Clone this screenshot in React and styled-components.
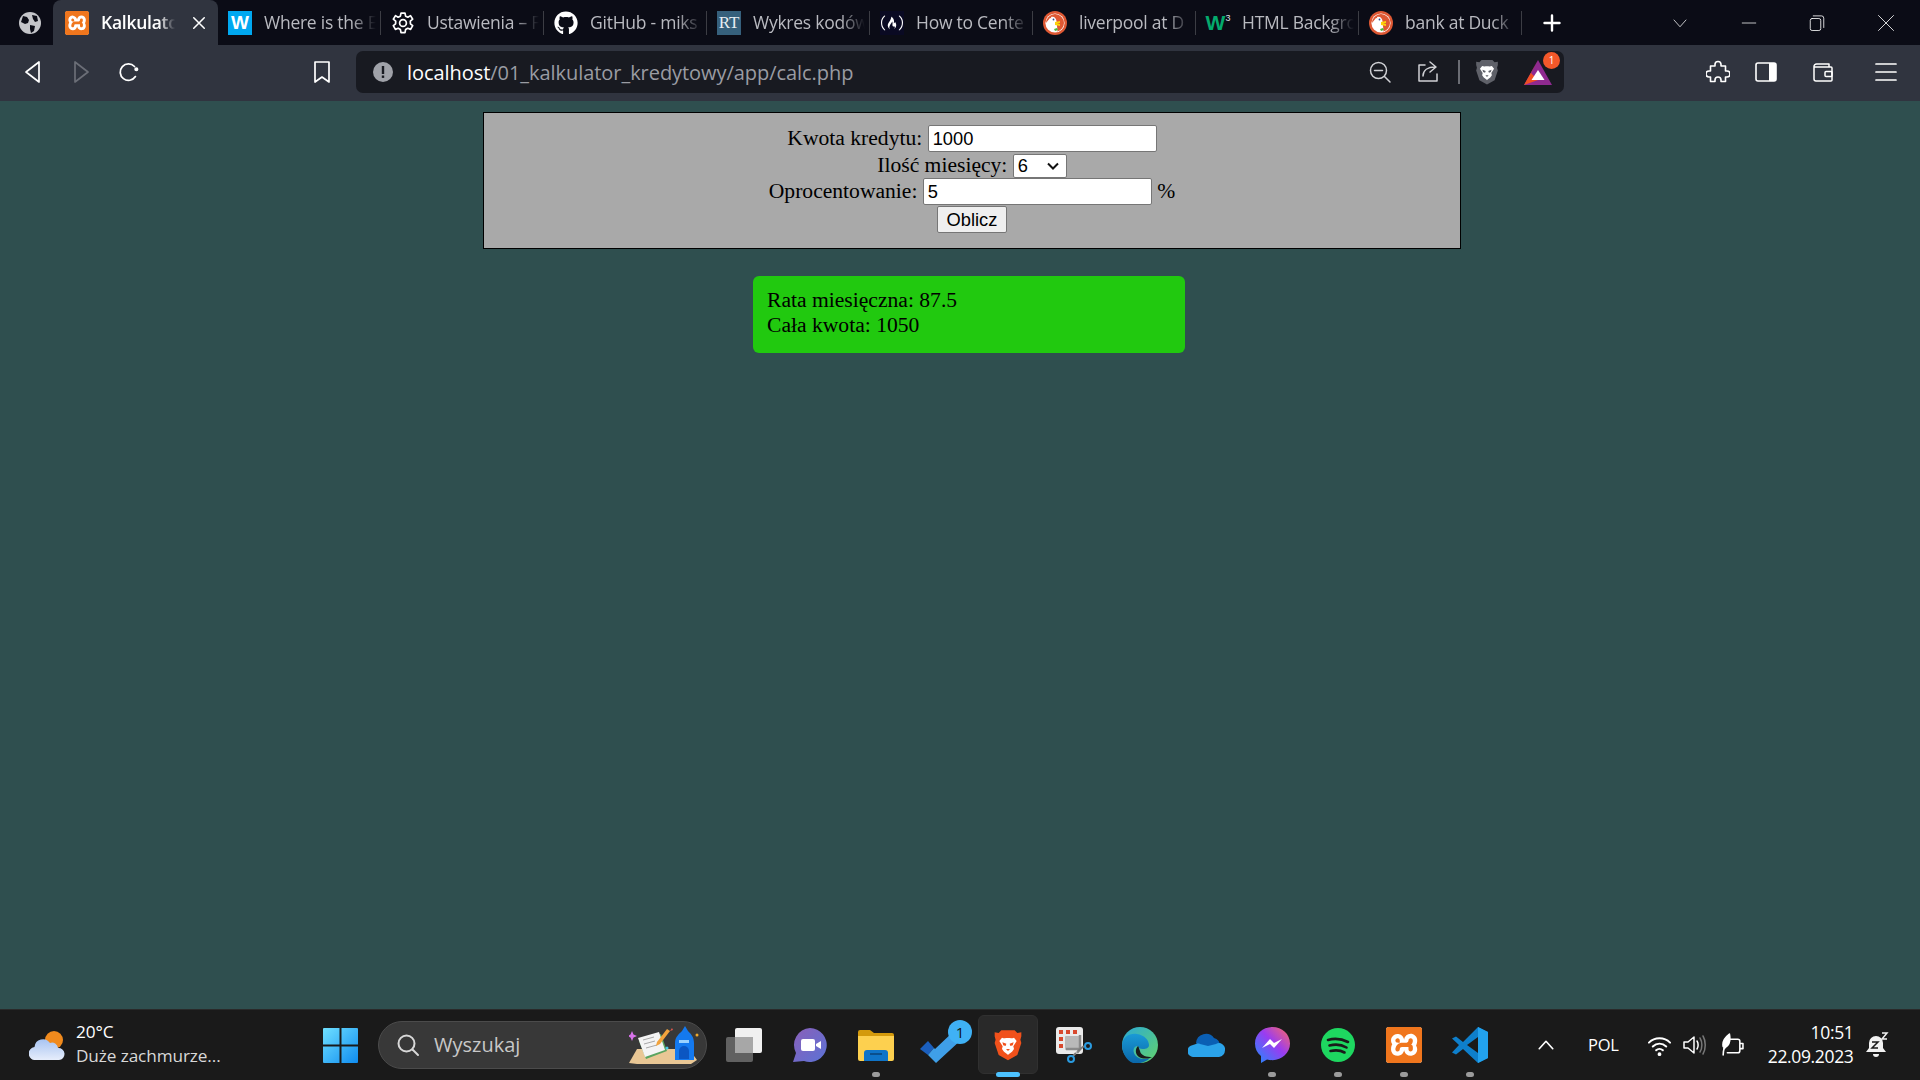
import React from "react";
import styled, { createGlobalStyle } from "styled-components";
import { FaGithub } from "react-icons/fa";
import { SiFreecodecamp, SiXampp } from "react-icons/si";

const UI_FONT = '"Open Sans", "Noto Sans", "Liberation Sans", sans-serif';

const SELECT_ARROW =
  "url(\"data:image/svg+xml,%3Csvg xmlns='http://www.w3.org/2000/svg' width='12' height='8' viewBox='0 0 12 8'%3E%3Cpath d='M1 1.500l5 5 5-5' fill='none' stroke='%23111' stroke-width='2'/%3E%3C/svg%3E\")";

const GlobalStyle = createGlobalStyle`
  html, body { margin: 0; padding: 0; height: 100%; background: #2f4f4f; overflow: hidden; }
  #root { height: 100%; }
`;

const Screen = styled.div`
  height: 100vh;
  display: flex;
  flex-direction: column;
  font-family: ${UI_FONT};
`;

/* ---------- tabs ---------- */
const TabStrip = styled.div`
  height: 45px;
  flex: none;
  display: flex;
  align-items: center;
  background: #0b0c16;
  color: #fff;
`;

const GlobeSlot = styled.div`
  width: 53px;
  display: flex;
  justify-content: center;
  padding-left: 7px;
  box-sizing: border-box;
`;

const Tab = styled.div`
  width: ${(p) => (p.$active ? "165px" : "163px")};
  height: 45px;
  flex: none;
  box-sizing: border-box;
  display: flex;
  align-items: center;
  gap: 12px;
  padding-left: ${(p) => (p.$active ? "12px" : "10px")};
  background: ${(p) => (p.$active ? "#30343f" : "transparent")};
  border-radius: ${(p) => (p.$active ? "8px 8px 0 0" : "0")};
  position: relative;
  ${(p) =>
    !p.$active &&
    `&::after {
      content: "";
      position: absolute;
      right: 0;
      top: 11px;
      width: 1px;
      height: 24px;
      background: #3c3d44;
    }`}
`;

const TabTitle = styled.span`
  width: ${(p) => (p.$active ? "74px" : "112px")};
  margin-top: -2px;
  overflow: hidden;
  white-space: nowrap;
  font-size: 17.5px;
  font-weight: ${(p) => (p.$active ? 600 : 400)};
  letter-spacing: -0.25px;
  color: ${(p) => (p.$active ? "#fff" : "#b9bac0")};
  mask-image: linear-gradient(to right, #000 78%, transparent);
`;

const CloseMark = styled.span`
  margin-left: 5px;
  display: flex;
`;

const Tile = styled.span`
  width: 24px;
  height: 24px;
  flex: none;
  display: flex;
  align-items: center;
  justify-content: center;
  background: ${(p) => p.$bg};
  color: ${(p) => p.$color || "#fff"};
  font-family: ${(p) => p.$font || '"Liberation Sans", sans-serif'};
  font-weight: ${(p) => p.$weight || 700};
  font-size: ${(p) => p.$size || "20px"};
  line-height: 1;
`;

const W3Sup = styled.sup`
  font-size: 9px;
  color: #dfe2e6;
  margin-top: -9px;
  font-weight: 400;
`;

const NewTab = styled.div`
  margin-left: 21px;
  display: flex;
`;

const WindowButtons = styled.div`
  margin-left: auto;
  display: flex;
  align-items: center;
`;

const WinButton = styled.div`
  width: 68.5px;
  display: flex;
  justify-content: center;
`;

/* ---------- toolbar ---------- */
const Toolbar = styled.div`
  height: 56px;
  flex: none;
  box-sizing: border-box;
  padding-bottom: 2px;
  display: flex;
  align-items: center;
  background: #30343f;
`;

const NavSlot = styled.div`
  width: ${(p) => p.$w}px;
  margin-left: ${(p) => p.$ml || 0}px;
  flex: none;
  display: flex;
  justify-content: center;
`;

const BookmarkSlot = styled.div`
  width: 179px;
  flex: none;
  box-sizing: border-box;
  padding-right: 9px;
  display: flex;
  justify-content: flex-end;
`;

const AddressBar = styled.div`
  width: 1208px;
  height: 42px;
  flex: none;
  margin-left: 16px;
  box-sizing: border-box;
  padding-left: 17px;
  display: flex;
  align-items: center;
  background: #181a21;
  border-radius: 7px;
`;

const Url = styled.div`
  margin-left: 14px;
  font-size: 20px;
  letter-spacing: -0.055px;
  color: #9a9ca3;
  white-space: nowrap;
  b {
    font-weight: 400;
    color: #fff;
  }
`;

const AddressTools = styled.div`
  margin-left: auto;
  display: flex;
  align-items: center;
`;

const ToolDivider = styled.span`
  width: 1.5px;
  height: 24px;
  background: #6b6d74;
  margin: 0 14.5px 0 6px;
`;

const AlertIcon = styled.span`
  position: relative;
  display: flex;
  margin: 0 12px 0 24px;
`;

const AlertBadge = styled.span`
  position: absolute;
  top: -7px;
  right: -8px;
  width: 17px;
  height: 17px;
  border-radius: 50%;
  background: #f4582a;
  color: #fff;
  font-size: 10px;
  display: flex;
  align-items: center;
  justify-content: center;
`;

const ToolbarRight = styled.div`
  margin-left: 142px;
  display: flex;
  align-items: center;
`;

/* ---------- page ---------- */
const Page = styled.main`
  flex: 1;
  background: #2f4f4f;
  padding-top: 11px;
  font-family: "Liberation Serif", "Times New Roman", serif;
  font-size: 21.6px;
  color: #000;
`;

const CalcForm = styled.form`
  width: 978px;
  height: 137px;
  margin-left: 483px;
  box-sizing: border-box;
  padding-top: 12px;
  border: 1.5px solid #000;
  background: #a9a9a9;
  text-align: center;
`;

const FormLine = styled.div`
  height: ${(p) => p.$h}px;
`;

const TextInput = styled.input`
  width: 229px;
  height: 27px;
  box-sizing: border-box;
  padding: 1px 4px;
  margin: 0;
  border: 1px solid #767676;
  border-radius: 2px;
  background: #fff;
  font-family: "Liberation Sans", Arial, sans-serif;
  font-size: 18.3px;
  color: #000;
`;

const MonthSelect = styled.select`
  width: 54px;
  height: 24px;
  box-sizing: border-box;
  margin: 0;
  padding: 0 0 0 4px;
  appearance: none;
  border: 1px solid #767676;
  border-radius: 2px;
  background: #fff ${SELECT_ARROW} no-repeat right 7px center;
  font-family: "Liberation Sans", Arial, sans-serif;
  font-size: 18.3px;
  color: #000;
`;

const SubmitButton = styled.button`
  width: 70px;
  height: 27px;
  padding: 0;
  margin: 0;
  border: 1px solid #767676;
  border-radius: 2px;
  background: #efefef;
  font-family: "Liberation Sans", Arial, sans-serif;
  font-size: 18.3px;
  color: #000;
`;

const ResultBox = styled.div`
  width: 432px;
  height: 77px;
  margin: 27px 0 0 753px;
  box-sizing: border-box;
  padding: 12px 14px;
  background: #21c90f;
  border-radius: 6px;
  line-height: 25px;
`;

/* ---------- taskbar ---------- */
const Taskbar = styled.footer`
  height: 71px;
  flex: none;
  display: flex;
  align-items: center;
  background: #1a1a1a;
  border-top: 1px solid #2a2a2a;
  box-sizing: border-box;
  color: #fff;
`;

const Weather = styled.div`
  width: 323px;
  flex: none;
  box-sizing: border-box;
  padding-left: 29px;
  display: flex;
  align-items: center;
  gap: 11px;
`;

const WeatherText = styled.div`
  margin-top: -2px;
  font-size: 17.2px;
  line-height: 24px;
  letter-spacing: -0.1px;
  span {
    display: block;
    color: #d8d8d8;
  }
`;

const StartButton = styled.div`
  width: 35px;
  flex: none;
  display: flex;
`;

const SearchBox = styled.div`
  width: 329px;
  height: 48px;
  flex: none;
  margin-left: 20px;
  box-sizing: border-box;
  padding: 0 6px 0 17px;
  display: flex;
  align-items: center;
  gap: 14px;
  background: #383838;
  border: 1px solid #4b4b4b;
  border-radius: 24px;
  font-size: 20px;
  color: #c8c8c8;
`;

const SearchLabel = styled.span`
  margin-top: -2px;
`;

const SearchArt = styled.span`
  margin-left: auto;
  display: flex;
`;

const TaskIcons = styled.div`
  margin-left: 4px;
  display: flex;
  flex: none;
`;

const TaskSlot = styled.div`
  width: 66px;
  height: 60px;
  position: relative;
  display: flex;
  align-items: center;
  justify-content: center;
`;

const ActiveTile = styled.span`
  position: absolute;
  left: 3px;
  top: 0;
  width: 60px;
  height: 59px;
  background: #292929;
  border: 1px solid #303030;
  box-sizing: border-box;
  border-radius: 6px;
`;

const RunDot = styled.span`
  position: absolute;
  left: 50%;
  bottom: -2px;
  transform: translateX(-50%);
  width: ${(p) => (p.$active ? "24px" : "8px")};
  height: 5px;
  border-radius: 3px;
  background: ${(p) => (p.$active ? "#4cc2ff" : "#9b9b9b")};
`;

const TaskGlyph = styled.span`
  position: relative;
  display: flex;
`;

const CountBadge = styled.span`
  position: absolute;
  top: 5px;
  right: 3px;
  width: 24px;
  height: 24px;
  border-radius: 50%;
  background: #3fb1f5;
  color: #111;
  font-size: 15px;
  display: flex;
  align-items: center;
  justify-content: center;
`;

const Tray = styled.div`
  flex: 1;
  display: flex;
  align-items: center;
  padding-left: 34px;
`;

const Lang = styled.span`
  margin: -2px 30px 0 33px;
  font-size: 16.5px;
  letter-spacing: -0.3px;
`;

const TrayIcons = styled.div`
  display: flex;
  align-items: center;
  gap: 12px;
`;

const Clock = styled.div`
  width: 109px;
  margin-top: -3px;
  text-align: right;
  font-size: 17.5px;
  line-height: 24px;
  letter-spacing: -0.35px;
`;

const Bell = styled.span`
  margin-left: 12px;
  display: flex;
`;

const XamppMark = styled.span`
  display: flex;
  background: #fff;
  border-radius: 3px;
  box-shadow: inset 0 0 0 2px #f0761d;
`;

/* ---------- drawings ---------- */
const Line = ({ w = 24, h = 24, vb = "0 0 24 24", stroke = "#fff", sw = 1.6, children }) => (
  <svg width={w} height={h} viewBox={vb} fill="none" stroke={stroke} strokeWidth={sw} strokeLinecap="round" strokeLinejoin="round">
    {children}
  </svg>
);

const Globe = () => (
  <svg width="22" height="22" viewBox="0 0 22 22">
    <circle cx="11" cy="11" r="11" fill="#c4c5c9" />
    <path d="M4 4l4 1 2 3-1 3-3 1-4-2zM13 3l5 1 1 5-3 1-2-3zM11 13l5 1-1 5-3 2-1-4z" fill="#0b0c16" />
  </svg>
);

const Gear = () => (
  <Line sw={1.7}>
    <circle cx="12" cy="12" r="3.4" />
    <path d="M10 2.2h4l.6 3 2.3 1 2.6-1.6 2.2 3.6-2.4 2 .1 2.6 2.3 1.9-2.1 3.700-2.8-1.1-2.2 1.300-.6 3.100h-4l-.6-3.100-2.2-1.300-2.8 1.100-2.1-3.700 2.300-1.900.1-2.600-2.400-2 2.200-3.600 2.600 1.600 2.300-1z" />
  </Line>
);

const Duck = () => (
  <svg width="24" height="24" viewBox="0 0 24 24">
    <circle cx="12" cy="12" r="12" fill="#de5833" />
    <circle cx="12" cy="12" r="9.6" fill="#fff" />
    <path d="M3 12a9 9 0 0 1 9-9 9 9 0 0 1 9 9 9 9 0 0 1-7 8.600L13 16l-2-8-4-1z" fill="#de5833" />
    <path d="M8 6c3-1 5 1 5.500 4l1 10h-4L9 12z" fill="#fff" />
    <path d="M12 11l5-1v2l-3 .6 3 .4v2l-5-1z" fill="#fdd20a" />
    <path d="M11 18l3-1 1 2-3 1z" fill="#4cba3c" />
    <circle cx="10.5" cy="8.5" r=".9" fill="#2d4f8e" />
  </svg>
);

const ChevronDown = () => (
  <Line w={18} h={18} sw={1}>
    <path d="M4 8l8 9 8-9" />
  </Line>
);

const Restore = () => (
  <Line w={18} h={18} sw={1.1}>
    <rect x="3" y="6" width="14" height="16" rx="2.5" />
    <path d="M7 2.500h11a3 3 0 0 1 3 3V18" />
  </Line>
);

const BraveLogo = ({ size = 30, shield = "#f1511b", face = "#fff", eye = "#f1511b" }) => (
  <svg width={size} height={size} viewBox="0 0 24 24">
    <path d="M7 1h10l2 2 3-.5 0 3L21.300 8l.7 2.500-3 9-7 4-7-4-3-9L2.700 8 2 5.500l0-3 3 .5z" fill={shield} />
    <path d="M7.500 6.500c1.500.7 3 .3 4.500.3s3 .4 4.500-.3l2 2.500-2.500 4 .5 2-1.500 2-2.500 2-.5.500-.5-.5-2.500-2-1.500-2 .5-2-2.500-4z" fill={face} />
    <path d="M7.800 10l3 1-.6 1.700-1.800-.6zM16.200 10l-3 1 .6 1.700 1.800-.6zM10.500 15h3L12 16.500z" fill={eye} />
  </svg>
);

const BatIcon = () => (
  <svg width="28" height="27" viewBox="0 0 28 27">
    <path d="M14 1L28 26H0z" fill="#8f2a90" />
    <path d="M14 1L7 14 14 21 0 26z" fill="#f04f24" />
    <path d="M14 11l6.500 10h-13z" fill="#fff" />
  </svg>
);

const Puzzle = () => (
  <Line sw={1.6}>
    <path d="M9 4.500a3 3 0 0 1 6 0V6h4.500v5H21a3 3 0 0 1 0 6h-1.500v4.500H15V20a3 3 0 0 0-6 0v1.500H4.500V17H3a3 3 0 0 1 0-6h1.500V6H9z" />
  </Line>
);

const SidePanel = () => (
  <svg width="22" height="22" viewBox="0 0 22 22">
    <rect x="1" y="2" width="20" height="18" rx="2" fill="none" stroke="#fff" strokeWidth="1.6" />
    <rect x="14" y="2" width="7" height="18" fill="#fff" />
  </svg>
);

const Wallet = () => (
  <Line sw={1.5}>
    <path d="M3 6.500A2.500 2.500 0 0 1 5.500 4H18v3M3 6.500V19a2 2 0 0 0 2 2h15a1 1 0 0 0 1-1V8a1 1 0 0 0-1-1H3.500" />
    <rect x="14" y="11.500" width="7" height="5" rx="1" />
  </Line>
);

const WeatherIcon = () => (
  <svg width="36" height="30" viewBox="0 0 36 30">
    <defs>
      <linearGradient id="cl" x1="0" y1="0" x2="0" y2="1">
        <stop offset="0" stopColor="#a8c4f2" />
        <stop offset="1" stopColor="#e6edfb" />
      </linearGradient>
    </defs>
    <circle cx="25" cy="10" r="9" fill="#f08a1d" />
    <path d="M7 30a6.500 6.500 0 0 1-1.500-13A8.500 8.500 0 0 1 21 13a6 6 0 0 1 8 5 6 6 0 0 1 1 12z" fill="url(#cl)" />
  </svg>
);

const WindowsLogo = () => (
  <svg width="35" height="35" viewBox="0 0 35 35">
    <defs>
      <linearGradient id="win" x1="0" y1="0" x2="1" y2="1">
        <stop offset="0" stopColor="#6fe0ff" />
        <stop offset="1" stopColor="#0f8cf0" />
      </linearGradient>
    </defs>
    <path d="M1 0h15.500v16.500H0V1a1 1 0 0 1 1-1zM18.500 0H34a1 1 0 0 1 1 1v15.500H18.500zM0 18.500h16.500V35H1a1 1 0 0 1-1-1zM18.500 18.500H35V34a1 1 0 0 1-1 1H18.500z" fill="url(#win)" />
  </svg>
);

const SearchGlyph = () => (
  <Line w={24} h={24} stroke="#d8d8d8" sw={2}>
    <circle cx="10.500" cy="10.500" r="8" />
    <path d="M16.500 16.500L22 22" />
  </Line>
);

const SchoolArt = () => (
  <svg width="71" height="38" viewBox="0 0 71 38">
    <path d="M0 37l8-14h52l8 11-6 4H8z" fill="#e9c795" />
    <path d="M10 15l22-7 6 17-21 8z" fill="#5aa45f" />
    <path d="M9 12l21-6 6 18-20 7z" fill="#f4f4f4" />
    <path d="M14 14l11-3M15 18l11-3M17 22l11-3" stroke="#a8a8a8" strokeWidth="1" />
    <path d="M28 16l10-13 3 2-10 13-4 2z" fill="#f2a33c" />
    <path d="M41 5l2-3 1 2z" fill="#e2574c" />
    <path d="M46 34V17c0-6 4-9 7-12l3-5 3 5c3 3 6 6 6 12v17z" fill="#1479ef" />
    <path d="M50 33V25a5 5 0 0 1 10 0v8z" fill="#0b56c2" />
    <path d="M50 14h10v3H50z" fill="#9ad2ff" />
    <path d="M3 5l1.500 3.500L8 10l-3.500 1.500L3 15l-1.500-3.500L-2 10l3.500-1.500z" fill="#d873ea" />
    <circle cx="38" cy="22" r="1.5" fill="#49c8e8" />
    <circle cx="68" cy="9" r="1.5" fill="#f0a92a" />
  </svg>
);

const TaskView = () => (
  <svg width="36" height="34" viewBox="0 0 36 34">
    <rect x="0" y="9" width="27" height="25" rx="2" fill="#616161" />
    <rect x="9" y="0" width="27" height="25" rx="2" fill="#f0f0f0" />
    <rect x="9" y="9" width="18" height="16" fill="#a7a7a7" />
  </svg>
);

const Teams = () => (
  <svg width="34" height="34" viewBox="0 0 34 34">
    <defs>
      <linearGradient id="tm" x1="0" y1="0" x2="1" y2="1">
        <stop offset="0" stopColor="#8a5fb8" />
        <stop offset="1" stopColor="#5b73d6" />
      </linearGradient>
    </defs>
    <path d="M17 0a17 17 0 1 1-6 33l-11 1 3-9A17 17 0 0 1 17 0z" fill="url(#tm)" />
    <rect x="8" y="11" width="14" height="12" rx="2" fill="#fff" />
    <path d="M23 16l5-3v8l-5-3z" fill="#fff" />
  </svg>
);

const Explorer = () => (
  <svg width="36" height="32" viewBox="0 0 36 32">
    <path d="M0 3a2 2 0 0 1 2-2h10l4 3h18a2 2 0 0 1 2 2v4H0z" fill="#d49a0c" />
    <path d="M0 7h36v23a2 2 0 0 1-2 2H2a2 2 0 0 1-2-2z" fill="#fdd04f" />
    <path d="M6 32V24a3 3 0 0 1 3-3h18a3 3 0 0 1 3 3v8z" fill="#0f74c8" />
    <rect x="12" y="24" width="12" height="2" fill="#0a4f8c" />
  </svg>
);

const TodoCheck = () => (
  <svg width="44" height="36" viewBox="0 0 44 36">
    <path d="M0 22L8 14 14 21 8 28z" fill="#1b5fbd" />
    <path d="M8 28L14 21 15 22 34 4l8 8-26 24z" fill="#3f9fe8" />
  </svg>
);

const SnipTool = () => (
  <svg width="36" height="36" viewBox="0 0 36 36">
    <rect x="0" y="0" width="27" height="27" rx="3" fill="#eaeaea" />
    <path d="M3 3h4v4H3zM10 3h4v4h-4zM17 3h4v4h-4zM3 10h4v4H3zM3 17h4v4H3z" fill="#d8482d" />
    <rect x="9" y="9" width="15" height="14" rx="1" fill="#b9b9b9" />
    <path d="M24 8v14l-3 4" stroke="#8a8a8a" strokeWidth="2.5" fill="none" />
    <path d="M10 22h13" stroke="#8a8a8a" strokeWidth="2.5" />
    <path d="M20 26l-3 3M22 24l6-5" stroke="#7a7a7a" strokeWidth="2" />
    <circle cx="15" cy="32" r="3" fill="none" stroke="#2a9be0" strokeWidth="2" />
    <circle cx="32" cy="19" r="3" fill="none" stroke="#2a9be0" strokeWidth="2" />
  </svg>
);

const Edge = () => (
  <svg width="36" height="36" viewBox="0 0 36 36">
    <defs>
      <linearGradient id="eg" x1="0" y1="0" x2="1" y2="1">
        <stop offset="0" stopColor="#2aa9d6" />
        <stop offset="1" stopColor="#64d36b" />
      </linearGradient>
      <linearGradient id="eb" x1="0" y1="0" x2="0" y2="1">
        <stop offset="0" stopColor="#1a9ad6" />
        <stop offset="1" stopColor="#0a66a8" />
      </linearGradient>
    </defs>
    <circle cx="18" cy="18" r="18" fill="url(#eg)" />
    <path d="M0 18C1 9 8 6 15 7c7 1 12 6 12 11 0 3-3 4-6 4s-5-1-5-3c-5 0-6 6-2 10 3 3 8 4 14 2-5 5-12 6-17 5C5 34 0 26 0 18z" fill="url(#eb)" />
    <path d="M16 19c-3 3-3 8 1 11 4 2 9 2 13 0-5 0-11-1-12-6-1-2-1-4-2-5z" fill="#1a1a1a" />
  </svg>
);

const OneDrive = () => (
  <svg width="37" height="24" viewBox="0 0 37 24">
    <path d="M8 10a10 10 0 0 1 18-5 8 8 0 0 1 6 7l-17 4z" fill="#0a5fb4" />
    <path d="M6 24a6 6 0 0 1-1-12c3-1 5-2 7-1l8 2 8-2a6 6 0 0 1 9 6 7 7 0 0 1-6 7z" fill="#2ba3ea" />
  </svg>
);

const Messenger = () => (
  <svg width="35" height="36" viewBox="0 0 35 36">
    <defs>
      <linearGradient id="ms" x1="0" y1="1" x2="1" y2="0">
        <stop offset="0" stopColor="#1e8cff" />
        <stop offset=".55" stopColor="#9a3cf0" />
        <stop offset="1" stopColor="#ff6a62" />
      </linearGradient>
    </defs>
    <path d="M17.500 0C8 0 0 7 0 16.500c0 5 2 9.500 6 12.500v7l6-3.500c2 .5 3.500.7 5.500.7C27 32.700 35 26 35 16.500S27 0 17.500 0z" fill="url(#ms)" />
    <path d="M7 21l8-9 4 4 8-4-8 9-4-4z" fill="#fff" />
  </svg>
);

const Spotify = () => (
  <svg width="34" height="34" viewBox="0 0 34 34" fill="none">
    <circle cx="17" cy="17" r="17" fill="#1ed760" />
    <path d="M7 12c7-2 14-1 20 2M8.500 17.500c6-1.500 12-1 17 2M9.500 23c5-1 10-.8 14 1.500" stroke="#1a1a1a" strokeWidth="2.6" strokeLinecap="round" />
  </svg>
);

const Xampp = ({ size }) => (
  <XamppMark>
    <SiXampp size={size} color="#f0761d" />
  </XamppMark>
);

const VsCode = () => (
  <svg width="36" height="36" viewBox="0 0 36 36">
    <path d="M26 0l10 5v26l-10 5-15-14-7 5.500-4-2L7 18 0 11.500l4-2L11 15z" fill="#0e7fcb" />
    <path d="M26 0l10 5v26l-10 5z" fill="#22a2ee" />
    <path d="M26 10L15 18l11 8z" fill="#1a1a1a" />
  </svg>
);

const Wifi = () => (
  <Line w={23} h={23} sw={2}>
    <path d="M1 9c6-6 16-6 22 0M5 13c4-4 10-4 14 0M8.500 17c2-2 5-2 7 0" />
    <circle cx="12" cy="21" r="1" fill="#fff" />
  </Line>
);

const Volume = () => (
  <svg width="24" height="24" viewBox="0 0 24 24" fill="none" strokeWidth="1.5" strokeLinecap="round" strokeLinejoin="round">
    <path d="M1 9h4l6-5v16l-6-5H1z" stroke="#fff" />
    <path d="M14 8c1.500 2 1.500 6 0 8" stroke="#fff" />
    <path d="M17 5c2.500 4 2.500 10 0 14M20 3c3 5 3 13 0 18" stroke="#777" />
  </svg>
);

const Battery = () => (
  <Line w={25} h={25} sw={1.5}>
    <path d="M11 6h7a2 2 0 0 1 2 2v9a2 2 0 0 1-2 2H8M20 10h3v5h-3" />
    <path d="M4 13C3 8 6 4 10 1c1 5 1 9-3 12l-2 2c-1 2-1 4-1 6" fill="#fff" />
  </Line>
);

const BellMuted = () => (
  <svg width="24" height="27" viewBox="0 0 24 27">
    <path d="M11 4a7 7 0 0 1 7 7v5l3 4H1l3-4v-5a7 7 0 0 1 7-7z" fill="#f2f2f2" />
    <path d="M8 22h6a3 3 0 0 1-6 0z" fill="#f2f2f2" />
    <path d="M7 10h6l-6 6h6" fill="none" stroke="#1a1a1a" strokeWidth="1.5" />
    <path d="M17 1h5l-5 6h5" fill="none" stroke="#f2f2f2" strokeWidth="1.5" />
  </svg>
);

const App = () => {
  return (
    <Screen>
      <GlobalStyle />
      <TabStrip>
        <GlobeSlot><Globe /></GlobeSlot>
        <Tab $active>
          <Xampp size={24} />
          <TabTitle $active>Kalkulato</TabTitle>
          <CloseMark>
            <Line w={14} h={14} sw={2.6}><path d="M3 3l18 18M21 3L3 21" /></Line>
          </CloseMark>
        </Tab>
        <Tab>
          <Tile $bg="#00a8f0" $size="19px">W</Tile>
          <TabTitle>Where is the E</TabTitle>
        </Tab>
        <Tab>
          <Gear />
          <TabTitle>Ustawienia – F</TabTitle>
        </Tab>
        <Tab>
          <FaGithub size={24} color="#fff" />
          <TabTitle>GitHub - miks</TabTitle>
        </Tab>
        <Tab>
          <Tile $bg="#36607c" $font='"Liberation Serif", serif' $weight={400} $size="17px" $color="#e8eef2">RT</Tile>
          <TabTitle>Wykres kodów</TabTitle>
        </Tab>
        <Tab>
          <Tile $bg="#0a0a23"><SiFreecodecamp size={22} color="#fff" /></Tile>
          <TabTitle>How to Cente</TabTitle>
        </Tab>
        <Tab>
          <Duck />
          <TabTitle>liverpool at D</TabTitle>
        </Tab>
        <Tab>
          <Tile $bg="transparent" $color="#04aa6d" $size="21px" $weight={700}>W<W3Sup>3</W3Sup></Tile>
          <TabTitle>HTML Backgro</TabTitle>
        </Tab>
        <Tab>
          <Duck />
          <TabTitle>bank at Duck</TabTitle>
        </Tab>
        <NewTab>
          <Line w={18} h={18} sw={3.2}><path d="M12 2v20M2 12h20" /></Line>
        </NewTab>
        <WindowButtons>
          <WinButton><ChevronDown /></WinButton>
          <WinButton><Line w={18} h={18} sw={1}><path d="M3 12h18" /></Line></WinButton>
          <WinButton><Restore /></WinButton>
          <WinButton><Line w={18} h={18} sw={1.1}><path d="M2 2l20 20M22 2L2 22" /></Line></WinButton>
        </WindowButtons>
      </TabStrip>

      <Toolbar>
        <NavSlot $w={65}>
          <Line w={18} h={24} vb="0 0 18 24" sw={1.7}><path d="M15 2v20L2 12z" /></Line>
        </NavSlot>
        <NavSlot $w={32}>
          <Line w={18} h={24} vb="0 0 18 24" stroke="#6b6e77" sw={1.7}><path d="M3 2v20l13-10z" /></Line>
        </NavSlot>
        <NavSlot $w={64}>
          <Line w={22} h={24} sw={1.9}>
            <path d="M19 17a9 9 0 1 1-1-11" />
            <circle cx="20" cy="9" r="1.3" fill="#fff" />
          </Line>
        </NavSlot>
        <BookmarkSlot>
          <Line w={18} h={24} vb="0 0 18 24" sw={1.7}><path d="M2 2h14v20l-7-5-7 5z" /></Line>
        </BookmarkSlot>
        <AddressBar>
          <svg width="20" height="20" viewBox="0 0 20 20">
            <circle cx="10" cy="10" r="10" fill="#a0a2a9" />
            <rect x="8.8" y="4" width="2.4" height="8" fill="#181a21" />
            <rect x="8.8" y="13.5" width="2.4" height="2.4" fill="#181a21" />
          </svg>
          <Url><b>localhost</b>/01_kalkulator_kredytowy/app/calc.php</Url>
          <AddressTools>
            <Line stroke="#d0d1d5" sw={1.5}>
              <circle cx="10.500" cy="10.500" r="8" />
              <path d="M6.500 10.500h8M16.500 16.500L22 22" />
            </Line>
            <NavSlot $w={48} $ml={12}>
              <Line stroke="#d0d1d5" sw={1.5}>
                <path d="M9 5H3v16h18v-7M7 16c0-6 5-9 12-9M14 2l6 5-6 5" />
              </Line>
            </NavSlot>
            <ToolDivider />
            <BraveLogo size={26} shield="#5f6169" eye="#5f6169" />
            <AlertIcon>
              <BatIcon />
              <AlertBadge>1</AlertBadge>
            </AlertIcon>
          </AddressTools>
        </AddressBar>
        <ToolbarRight>
          <Puzzle />
          <NavSlot $w={48} $ml={12}><SidePanel /></NavSlot>
          <NavSlot $w={48} $ml={9}><Wallet /></NavSlot>
          <NavSlot $w={48} $ml={15}>
            <Line sw={1.7}><path d="M2 4h20M2 12h20M2 20h20" /></Line>
          </NavSlot>
        </ToolbarRight>
      </Toolbar>

      <Page>
        <CalcForm onSubmit={(e) => e.preventDefault()}>
          <FormLine $h={28}>
            Kwota kredytu: <TextInput type="text" defaultValue="1000" />
          </FormLine>
          <FormLine $h={25}>
            Ilość miesięcy:{" "}
            <MonthSelect defaultValue="6">
              <option>6</option>
              <option>12</option>
              <option>24</option>
            </MonthSelect>
          </FormLine>
          <FormLine $h={28}>
            Oprocentowanie: <TextInput type="text" defaultValue="5" /> %
          </FormLine>
          <FormLine $h={27}>
            <SubmitButton type="submit">Oblicz</SubmitButton>
          </FormLine>
        </CalcForm>
        <ResultBox>
          Rata miesięczna: 87.5
          <br />
          Cała kwota: 1050
        </ResultBox>
      </Page>

      <Taskbar>
        <Weather>
          <WeatherIcon />
          <WeatherText>
            20°C
            <span>Duże zachmurze...</span>
          </WeatherText>
        </Weather>
        <StartButton><WindowsLogo /></StartButton>
        <SearchBox>
          <SearchGlyph />
          <SearchLabel>Wyszukaj</SearchLabel>
          <SearchArt><SchoolArt /></SearchArt>
        </SearchBox>
        <TaskIcons>
          <TaskSlot><TaskGlyph><TaskView /></TaskGlyph></TaskSlot>
          <TaskSlot><TaskGlyph><Teams /></TaskGlyph></TaskSlot>
          <TaskSlot><TaskGlyph><Explorer /></TaskGlyph><RunDot /></TaskSlot>
          <TaskSlot><TaskGlyph><TodoCheck /></TaskGlyph><CountBadge>1</CountBadge></TaskSlot>
          <TaskSlot>
            <ActiveTile />
            <TaskGlyph><BraveLogo size={32} /></TaskGlyph>
            <RunDot $active />
          </TaskSlot>
          <TaskSlot><TaskGlyph><SnipTool /></TaskGlyph></TaskSlot>
          <TaskSlot><TaskGlyph><Edge /></TaskGlyph></TaskSlot>
          <TaskSlot><TaskGlyph><OneDrive /></TaskGlyph></TaskSlot>
          <TaskSlot><TaskGlyph><Messenger /></TaskGlyph><RunDot /></TaskSlot>
          <TaskSlot><TaskGlyph><Spotify /></TaskGlyph><RunDot /></TaskSlot>
          <TaskSlot><TaskGlyph><Xampp size={36} /></TaskGlyph><RunDot /></TaskSlot>
          <TaskSlot><TaskGlyph><VsCode /></TaskGlyph><RunDot /></TaskSlot>
        </TaskIcons>
        <Tray>
          <Line w={18} h={18} sw={2.2}><path d="M3 17l9-10 9 10" /></Line>
          <Lang>POL</Lang>
          <TrayIcons>
            <Wifi />
            <Volume />
            <Battery />
          </TrayIcons>
          <Clock>
            10:51
            <br />
            22.09.2023
          </Clock>
          <Bell><BellMuted /></Bell>
        </Tray>
      </Taskbar>
    </Screen>
  );
};

export default App;
